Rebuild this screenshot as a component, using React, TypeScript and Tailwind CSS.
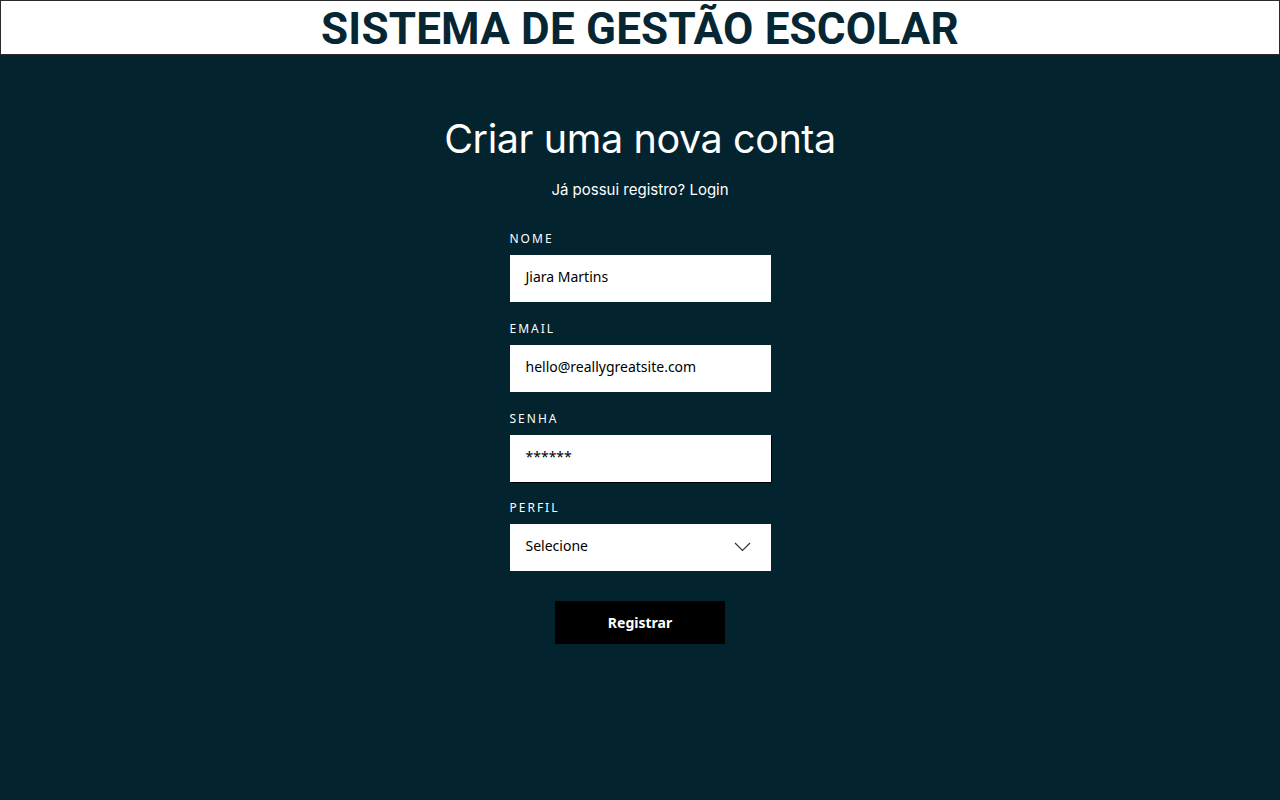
import React from "react";

const fields = [
  { label: "NOME", value: "Jiara Martins" },
  { label: "EMAIL", value: "hello@reallygreatsite.com" },
  { label: "SENHA", value: "******" },
];

function App() {
  return (
    <div className="min-h-[800px] w-full bg-[#03232f]" style={{ fontFamily: "Inter, 'Open Sans', sans-serif" }}>
      <header className="h-[55px] bg-white border border-[#2a2a2a] flex items-center justify-center">
        <h1
          className="text-[44px] font-bold text-[#062633] leading-none tracking-[0.2px] translate-y-[1px]"
          style={{ fontFamily: "Roboto, 'Liberation Sans', sans-serif" }}
        >
          SISTEMA DE GESTÃO ESCOLAR
        </h1>
      </header>

      <main className="flex flex-col items-center pt-[65px]">
        <h2 className="text-[39.5px] font-normal text-white leading-none tracking-[-0.4px]">Criar uma nova conta</h2>
        <p className="mt-[22px] text-[15px] text-white leading-none">Já possui registro? Login</p>

        <form className="mt-[36px] w-[261px] flex flex-col" style={{ fontFamily: "'Noto Sans', 'Open Sans', sans-serif" }}>
          {fields.map((f, i) => (
            <div key={f.label} className={i === 0 ? "" : "mt-[21px]"}>
              <label className="block text-[12px] tracking-[2px] text-white leading-none mb-[10px]">{f.label}</label>
              <div
                className={
                  "h-[47px] bg-white flex items-center px-[16px] text-[14px] text-black " +
                  (f.label === "SENHA" ? "shadow-[1px_1px_0_#000]" : "")
                }
              >
                <span className="-mt-[4px]">{f.value}</span>
              </div>
            </div>
          ))}

          <div className="mt-[20px]">
            <label className="block text-[12px] tracking-[2px] text-white leading-none mb-[10px]">PERFIL</label>
            <div className="h-[47px] bg-white flex items-center justify-between pl-[16px] pr-[20px] text-[14px] text-black">
              <span className="-mt-[4px]">Selecione</span>
              <svg width="17" height="10" viewBox="0 0 17 10" fill="none" stroke="#333" strokeWidth="1.2">
                <path d="M1 1l7.5 7.5L16 1" />
              </svg>
            </div>
          </div>

          <div className="flex justify-center mt-[30px]">
            <button
              type="button"
              className="w-[170px] h-[43px] bg-black text-white text-[14px] font-bold"
            >
              Registrar
            </button>
          </div>
        </form>
      </main>
    </div>
  );
}

export default App;
